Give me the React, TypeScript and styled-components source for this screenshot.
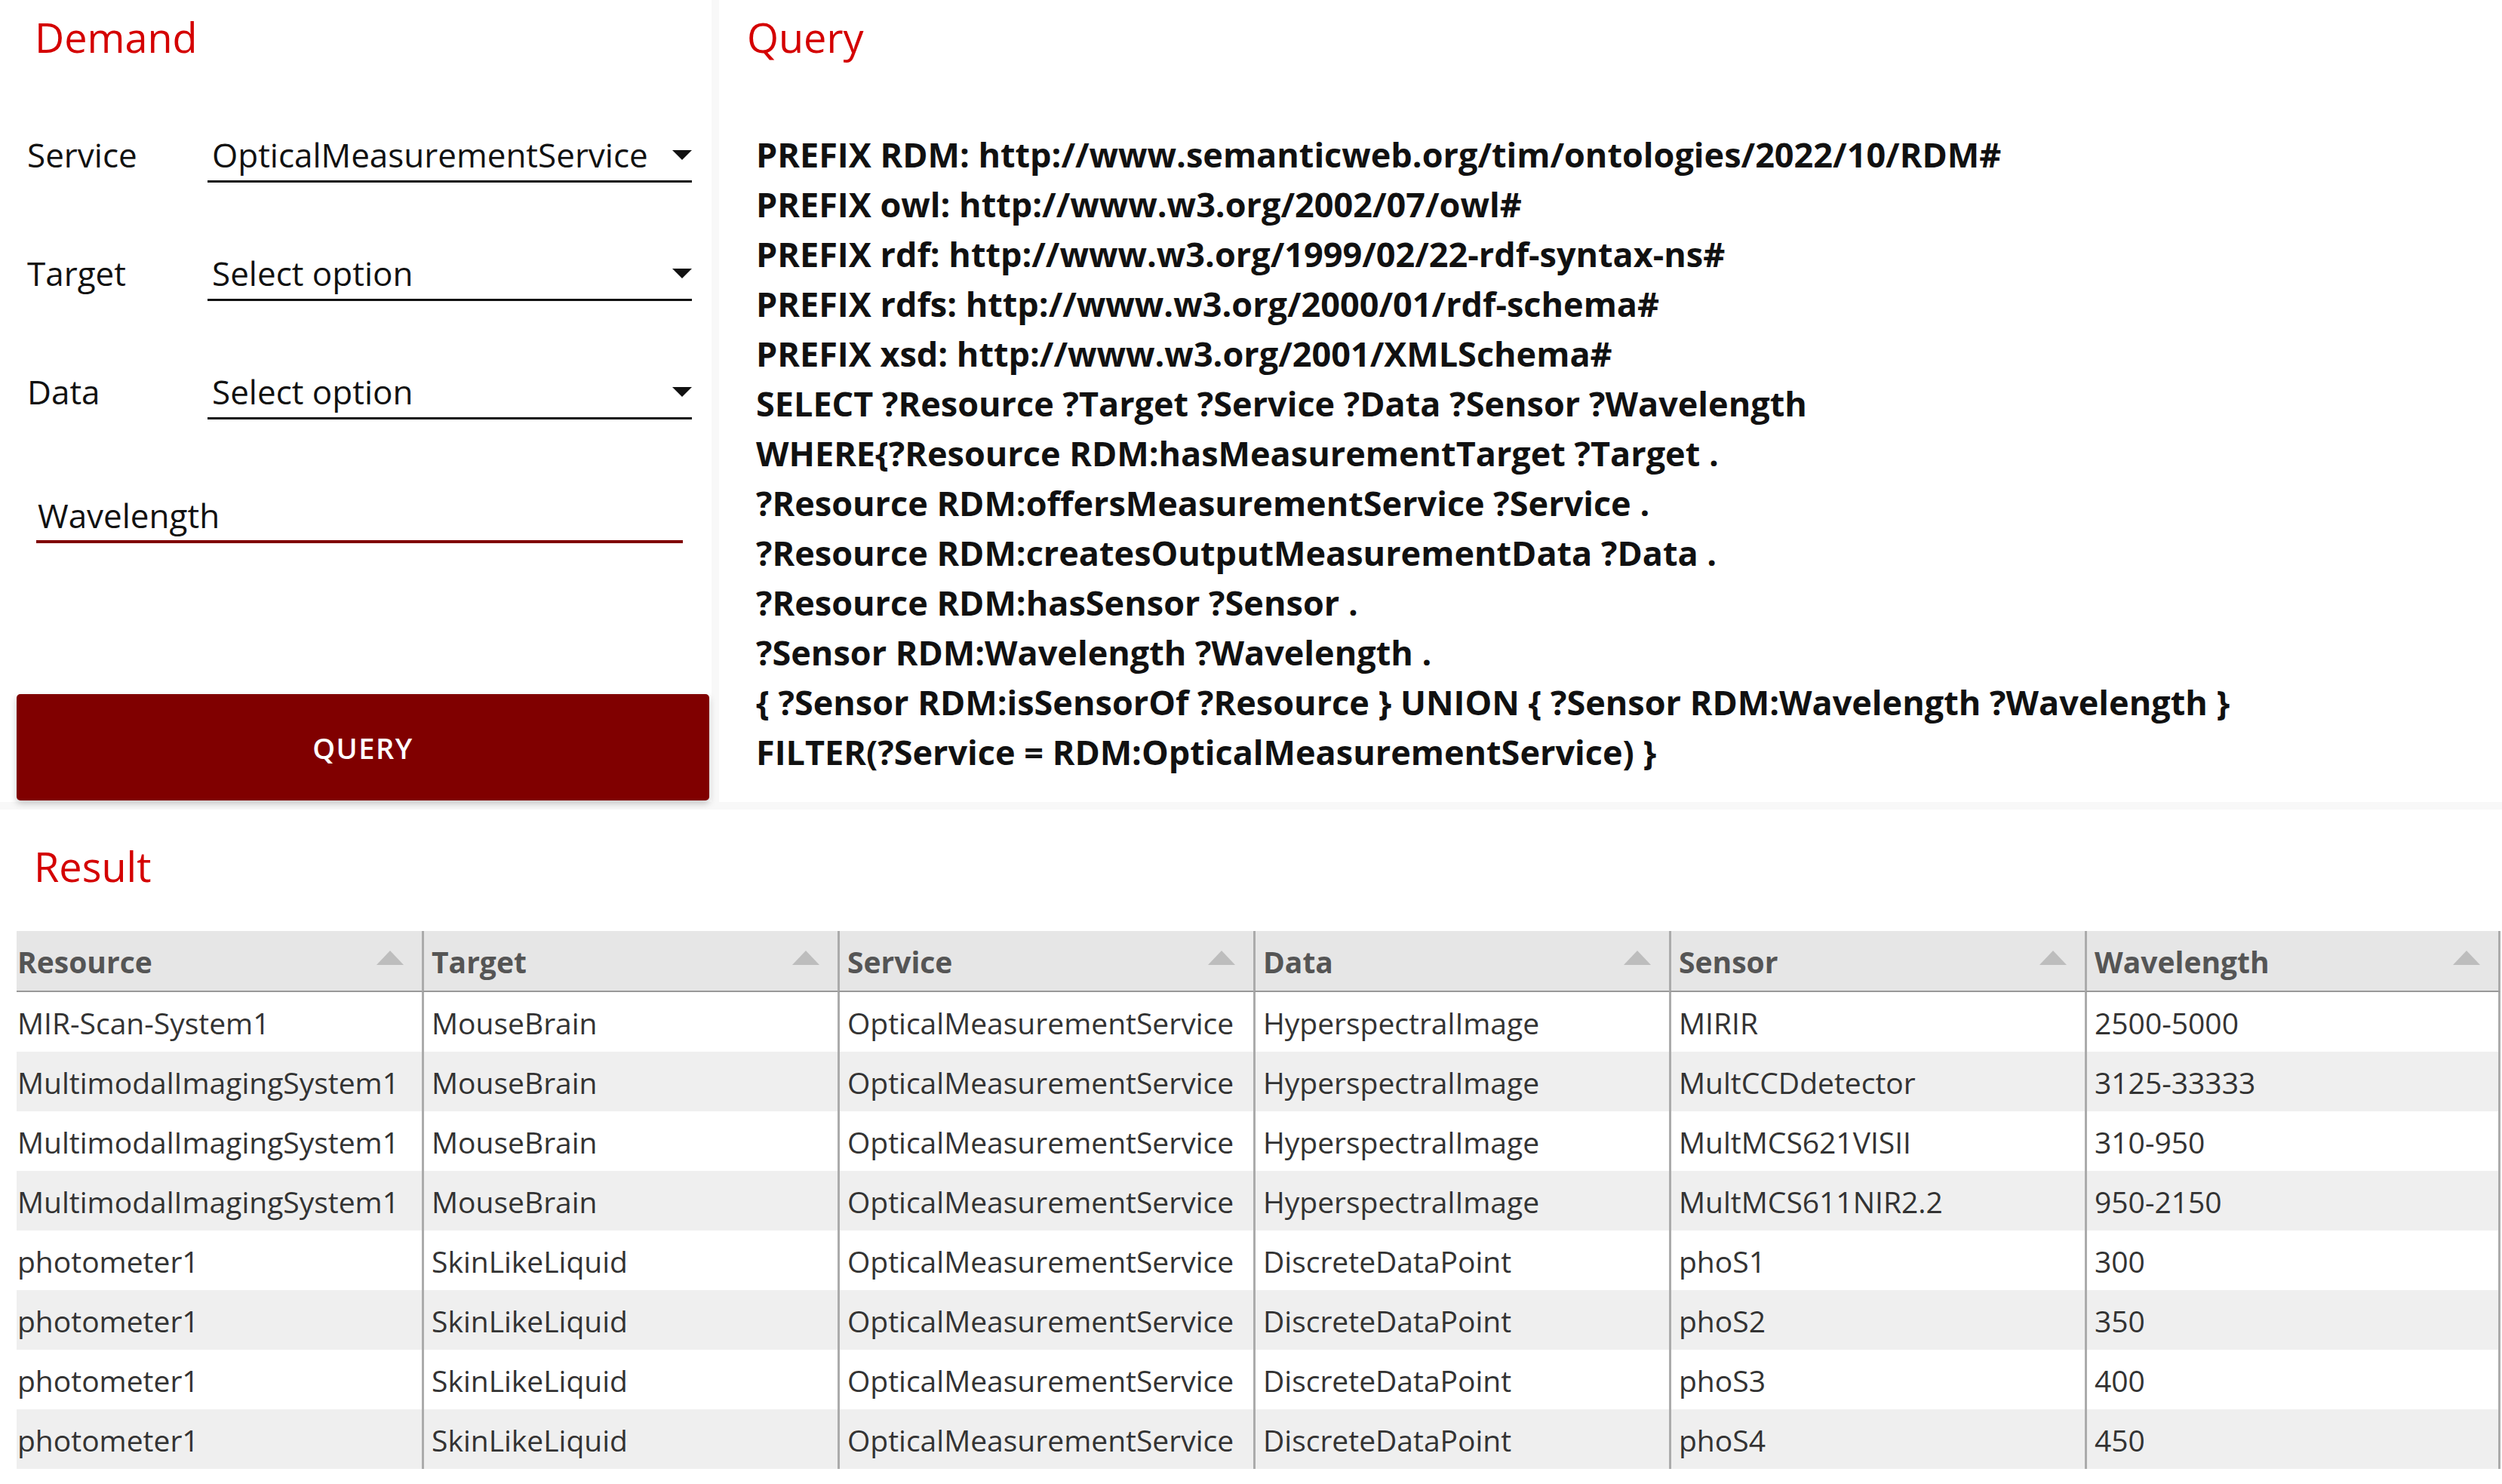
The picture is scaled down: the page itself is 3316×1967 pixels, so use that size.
import React from "react";
import styled, { createGlobalStyle } from "styled-components";

const GlobalStyle = createGlobalStyle`
  html, body { margin: 0; padding: 0; background: #ffffff; }
  body { font-family: "Open Sans", "Noto Sans", sans-serif; color: #111111; }
  * { box-sizing: border-box; }
`;

const Page = styled.div`
  width: 3316px;
  min-height: 1967px;
  background: #ffffff;
`;

const Top = styled.div`
  display: grid;
  grid-template-columns: 943px 1fr;
  column-gap: 10px;
  padding-bottom: 10px;
  background: #f8f8f8;
`;

const Card = styled.section`
  background: #ffffff;
  height: 1063px;
  padding-top: 19px;
`;

const SectionTitle = styled.h2<{ $indent: number }>`
  margin: 0;
  padding-left: ${(p) => p.$indent}px;
  font-size: 54px;
  line-height: 60px;
  font-weight: 500;
  color: #d40000;
`;

const Form = styled.div`
  margin-top: 101px;
  display: flex;
  flex-direction: column;
  gap: 95px;
`;

const FieldRow = styled.div`
  display: flex;
  align-items: flex-end;
  height: 62px;
  padding-left: 36px;
`;

const FieldLabel = styled.div`
  width: 239px;
  font-size: 44px;
  line-height: 50px;
  padding-bottom: 12px;
  color: #111;
`;

const Select = styled.div`
  width: 642px;
  display: flex;
  align-items: center;
  justify-content: space-between;
  padding: 0 0 9px 6px;
  border-bottom: 3px solid #111;
  font-size: 44px;
  line-height: 50px;
  color: #111;
`;

const Caret = styled.svg`
  width: 26px;
  height: 13px;
  flex: none;
`;

const TextField = styled.div`
  margin: 102px 0 0 48px;
  width: 857px;
  padding: 0 0 8px 2px;
  border-bottom: 4px solid #800000;
  font-size: 44px;
  line-height: 50px;
  color: #111;
`;

const QueryButton = styled.button`
  display: flex;
  align-items: center;
  justify-content: center;
  margin: 200px 0 0 22px;
  width: 918px;
  height: 141px;
  border: none;
  border-radius: 5px;
  background: #800000;
  color: #ffffff;
  font-family: "Open Sans", sans-serif;
  font-size: 38px;
  font-weight: 600;
  letter-spacing: 1.5px;
  box-shadow: 0 4px 10px rgba(0, 0, 0, 0.22);
`;

const QueryText = styled.div`
  margin-top: 93px;
  padding-left: 49px;
  font-size: 45px;
  line-height: 66px;
  font-weight: 700;
  color: #111;
  white-space: pre;
`;

const Result = styled.section`
  padding-top: 45px;
`;

const Table = styled.div`
  margin: 56px 0 0 22px;
  display: grid;
  grid-template-columns: 537px repeat(5, 551px);
  font-size: 39px;
`;

const HeadCell = styled.div<{ $first: boolean; $last: boolean }>`
  height: 81px;
  display: flex;
  align-items: flex-start;
  justify-content: space-between;
  padding: 3px 24px 0 ${(p) => (p.$first ? 1 : 10)}px;
  background: #e6e6e6;
  border-bottom: 2px solid #999;
  border-left: ${(p) => (p.$first ? "none" : "3px solid #ababab")};
  border-right: ${(p) => (p.$last ? "3px solid #ababab" : "none")};
  font-weight: 700;
  color: #555;
  line-height: 76px;
`;

const SortIcon = styled.svg`
  width: 36px;
  height: 19px;
  margin-top: 23px;
  flex: none;
`;

const Cell = styled.div<{ $first: boolean; $last: boolean; $alt: boolean }>`
  height: 79px;
  padding: 3px 0 0 ${(p) => (p.$first ? 1 : 10)}px;
  background: ${(p) => (p.$alt ? "#efefef" : "#ffffff")};
  border-left: ${(p) => (p.$first ? "none" : "3px solid #ababab")};
  border-right: ${(p) => (p.$last ? "3px solid #ababab" : "none")};
  color: #333;
  line-height: 76px;
  white-space: nowrap;
  overflow: hidden;
`;

const fields = [
  { label: "Service", value: "OpticalMeasurementService" },
  { label: "Target", value: "Select option" },
  { label: "Data", value: "Select option" },
];

const queryLines = [
  "PREFIX RDM: http://www.semanticweb.org/tim/ontologies/2022/10/RDM#",
  "PREFIX owl: http://www.w3.org/2002/07/owl#",
  "PREFIX rdf: http://www.w3.org/1999/02/22-rdf-syntax-ns#",
  "PREFIX rdfs: http://www.w3.org/2000/01/rdf-schema#",
  "PREFIX xsd: http://www.w3.org/2001/XMLSchema#",
  "SELECT ?Resource ?Target ?Service ?Data ?Sensor ?Wavelength",
  "WHERE{?Resource RDM:hasMeasurementTarget ?Target .",
  "?Resource RDM:offersMeasurementService ?Service .",
  "?Resource RDM:createsOutputMeasurementData ?Data .",
  "?Resource RDM:hasSensor ?Sensor .",
  "?Sensor RDM:Wavelength ?Wavelength .",
  "{ ?Sensor RDM:isSensorOf ?Resource } UNION { ?Sensor RDM:Wavelength ?Wavelength }",
  "FILTER(?Service = RDM:OpticalMeasurementService) }",
];

const columns = ["Resource", "Target", "Service", "Data", "Sensor", "Wavelength"];

const rows = [
  ["MIR-Scan-System1", "MouseBrain", "OpticalMeasurementService", "HyperspectralImage", "MIRIR", "2500-5000"],
  ["MultimodalImagingSystem1", "MouseBrain", "OpticalMeasurementService", "HyperspectralImage", "MultCCDdetector", "3125-33333"],
  ["MultimodalImagingSystem1", "MouseBrain", "OpticalMeasurementService", "HyperspectralImage", "MultMCS621VISII", "310-950"],
  ["MultimodalImagingSystem1", "MouseBrain", "OpticalMeasurementService", "HyperspectralImage", "MultMCS611NIR2.2", "950-2150"],
  ["photometer1", "SkinLikeLiquid", "OpticalMeasurementService", "DiscreteDataPoint", "phoS1", "300"],
  ["photometer1", "SkinLikeLiquid", "OpticalMeasurementService", "DiscreteDataPoint", "phoS2", "350"],
  ["photometer1", "SkinLikeLiquid", "OpticalMeasurementService", "DiscreteDataPoint", "phoS3", "400"],
  ["photometer1", "SkinLikeLiquid", "OpticalMeasurementService", "DiscreteDataPoint", "phoS4", "450"],
];

const CaretIcon = () => (
  <Caret viewBox="0 0 26 13">
    <path d="M0 0 H26 L13 13 Z" fill="#111" />
  </Caret>
);

const SortUp = () => (
  <SortIcon viewBox="0 0 36 19">
    <path d="M18 0 L36 19 H0 Z" fill="#bdbdbd" />
  </SortIcon>
);

export default function App() {
  return (
    <Page>
      <GlobalStyle />
      <Top>
        <Card>
          <SectionTitle $indent={46}>Demand</SectionTitle>
          <Form>
            {fields.map((f) => (
              <FieldRow key={f.label}>
                <FieldLabel>{f.label}</FieldLabel>
                <Select>
                  <span>{f.value}</span>
                  <CaretIcon />
                </Select>
              </FieldRow>
            ))}
          </Form>
          <TextField>Wavelength</TextField>
          <QueryButton>QUERY</QueryButton>
        </Card>
        <Card>
          <SectionTitle $indent={37}>Query</SectionTitle>
          <QueryText>
            {queryLines.map((l, i) => (
              <div key={i}>{l}</div>
            ))}
          </QueryText>
        </Card>
      </Top>
      <Result>
        <SectionTitle $indent={45}>Result</SectionTitle>
        <Table>
          {columns.map((c, i) => (
            <HeadCell key={c} $first={i === 0} $last={i === columns.length - 1}>
              <span>{c}</span>
              <SortUp />
            </HeadCell>
          ))}
          {rows.map((r, ri) =>
            r.map((v, ci) => (
              <Cell
                key={`${ri}-${ci}`}
                $first={ci === 0}
                $last={ci === r.length - 1}
                $alt={ri % 2 === 1}
              >
                {v}
              </Cell>
            ))
          )}
        </Table>
      </Result>
    </Page>
  );
}
